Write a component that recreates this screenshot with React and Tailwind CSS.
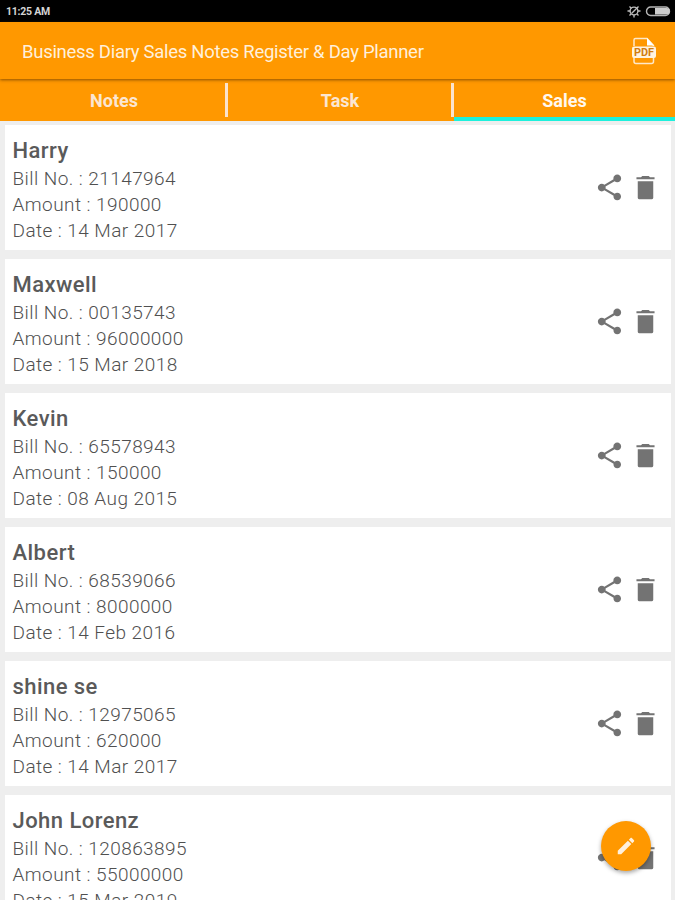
const sales = [
  { name: "Harry", bill: "21147964", amount: "190000", date: "14 Mar 2017" },
  { name: "Maxwell", bill: "00135743", amount: "96000000", date: "15 Mar 2018" },
  { name: "Kevin", bill: "65578943", amount: "150000", date: "08 Aug 2015" },
  { name: "Albert", bill: "68539066", amount: "8000000", date: "14 Feb 2016" },
  { name: "shine se", bill: "12975065", amount: "620000", date: "14 Mar 2017" },
  { name: "John Lorenz", bill: "120863895", amount: "55000000", date: "15 Mar 2019" },
];

function ShareIcon() {
  return (
    <svg viewBox="0 0 24 24" className="size-[31px] fill-[#737373]">
      <path d="M18 16.08c-.76 0-1.44.3-1.96.77L8.91 12.7c.05-.23.09-.46.09-.7s-.04-.47-.09-.7l7.05-4.11c.54.5 1.25.81 2.04.81 1.66 0 3-1.34 3-3s-1.34-3-3-3-3 1.34-3 3c0 .24.04.47.09.7L8.04 9.81C7.5 9.31 6.79 9 6 9c-1.66 0-3 1.34-3 3s1.34 3 3 3c.79 0 1.5-.31 2.04-.81l7.12 4.16c-.05.21-.08.43-.08.65 0 1.61 1.31 2.92 2.92 2.92s2.92-1.31 2.92-2.92-1.31-2.92-2.92-2.92z" />
    </svg>
  );
}

function TrashIcon() {
  return (
    <svg viewBox="0 0 24 24" className="size-[31px] fill-[#737373]">
      <path d="M6 7.200h12V20q0 1-1 1H7q-1 0-1-1zM19 4h-3.500l-1-1h-5l-1 1H5v1.700h14V4z" />
    </svg>
  );
}

function PdfIcon() {
  return (
    <svg viewBox="0 0 26 28" className="h-7 w-[26px]">
      <path d="M3 9V3q0-1.500 1.500-1.500H16L22.500 8.500V9M3 20v4.500q0 2 2 2H20.500q2 0 2-2V20" fill="none" stroke="#ffe8c8" strokeWidth="1.500" />
      <path d="M16 1l7 7.500h-7z" fill="#fff" />
      <rect x="1" y="9.500" width="24" height="11.500" rx="2" fill="#fff3e0" />
      <text x="13" y="18.800" textAnchor="middle" textLength="20" lengthAdjust="spacingAndGlyphs" className="fill-[#d07c10] font-['Roboto',sans-serif] text-[10px] font-bold">PDF</text>
    </svg>
  );
}

function StatusBar() {
  return (
    <div className="flex h-[22px] shrink-0 items-center justify-between bg-black pl-[6px] pr-[4px] text-[#d4d4d4]">
      <span className="pt-[3px] text-[10.500px] font-bold leading-none tracking-[-0.250px]">11:25 AM</span>
      <div className="flex items-center gap-1">
        <svg viewBox="0 0 14 14" className="size-[14px]" fill="none" stroke="#bdbdbd" strokeWidth="1.400">
          <circle cx="7" cy="7" r="3.900" />
          <path d="M4.500 9.500L11.500 2.500M7 11v2.500M.5 7h2.500M11 7h2.500M2.500 2.500l2 2M10 10l1.500 1.500M2.500 11.500l1.500-1.500" />
        </svg>
        <svg viewBox="0 0 26 12" className="h-3 w-[26px]">
          <rect x="1.500" y="2" width="23" height="8.500" rx="4.200" fill="none" stroke="#b5b5b5" strokeWidth="1.400" />
          <path d="M10 3h11.500a3.250 3.250 0 0 1 0 6.500H10z" fill="#ccc" />
        </svg>
      </div>
    </div>
  );
}

function Tabs() {
  return (
    <nav className="grid h-[42px] shrink-0 grid-cols-[226px_226px_223px] bg-[#ff9800] text-center text-[18px] font-bold leading-[44px]">
      <div className="flex text-[#fbe6d2]">
        <span className="h-[42px] grow pl-[3px]">Notes</span>
        <span className="-mr-[2px] mt-[4px] h-[34px] w-[3px] bg-[#fbe3cc]" />
      </div>
      <div className="flex text-[#fbe6d2]">
        <span className="h-[42px] grow pl-[3px]">Task</span>
        <span className="-mr-[2px] mt-[4px] h-[34px] w-[3px] bg-[#fbe3cc]" />
      </div>
      <div className="ml-[2px] h-[42px] border-b-4 border-[#1df0dc] text-[#fff8f0]">Sales</div>
    </nav>
  );
}

function SaleCard({ sale }) {
  return (
    <article className="flex h-[125px] shrink-0 items-center justify-between bg-white pl-[7.500px] pr-[10px]">
      <div className="pt-[5px] text-[19px] font-light leading-[26px] tracking-[0.430px] text-[#505050]">
        <h2 className="text-[22px] font-medium leading-[30px] tracking-[0.450px] text-[#5a5a5a]">{sale.name}</h2>
        <p>Bill No. : {sale.bill}</p>
        <p>Amount : {sale.amount}</p>
        <p>Date : {sale.date}</p>
      </div>
      <div className="flex gap-[5px]">
        <ShareIcon />
        <TrashIcon />
      </div>
    </article>
  );
}

export default function App() {
  return (
    <div className="relative flex h-[900px] w-[675px] flex-col overflow-hidden bg-[#eeeeee] font-['Roboto',sans-serif]">
      <StatusBar />
      <header className="z-10 flex h-[57px] shrink-0 items-center justify-between bg-[#ff9800] pl-[22px] pr-[18px] shadow-[0_1px_3px_rgba(90,50,0,0.700)]">
        <h1 className="pt-[4px] text-[18.500px] leading-none tracking-[-0.290px] text-[#fff0dc]">Business Diary Sales Notes Register &amp; Day Planner</h1>
        <PdfIcon />
      </header>
      <Tabs />
      <main className="flex min-h-0 grow flex-col gap-[9px] overflow-hidden pl-[5px] pr-[4px] pt-[4px]">
        {sales.map((sale) => <SaleCard key={sale.name} sale={sale} />)}
      </main>
      <button aria-label="Add sale" className="absolute left-[601px] top-[821px] z-20 flex size-[50px] items-center justify-center rounded-full bg-[#ff9800] shadow-[0_2px_4px_rgba(0,0,0,0.350)]">
        <svg viewBox="0 0 24 24" className="size-[22px] fill-[#fff0dc]">
          <path d="M3 17.250V21h3.750L17.810 9.940l-3.750-3.750L3 17.250zM20.710 7.040c.39-.39.39-1.020 0-1.410l-2.340-2.340c-.39-.39-1.020-.39-1.410 0l-1.830 1.830 3.750 3.750 1.830-1.830z" />
        </svg>
      </button>
    </div>
  );
}
